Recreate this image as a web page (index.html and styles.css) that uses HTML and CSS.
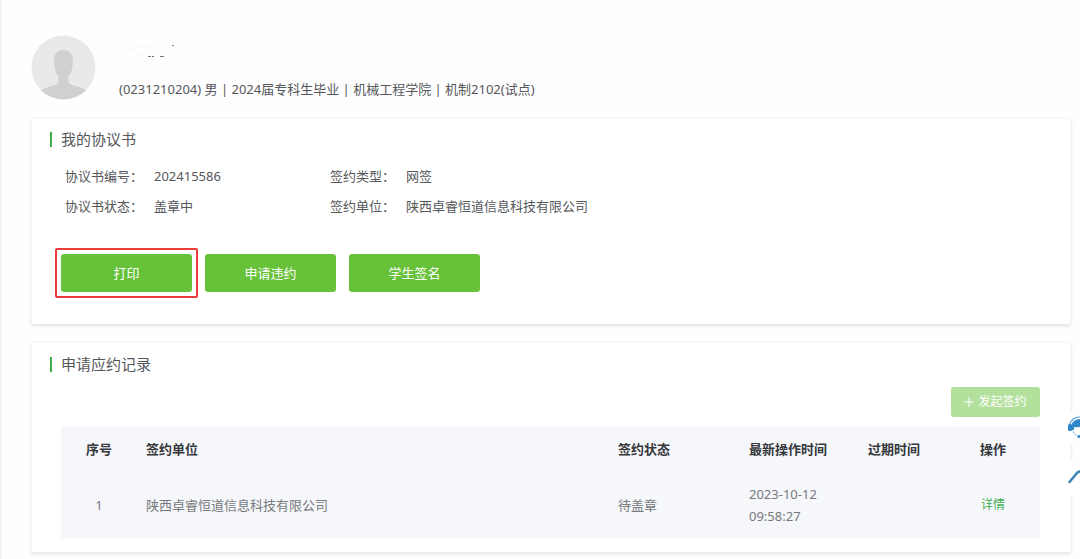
FILE: index.html
```
<!DOCTYPE html>
<html lang="zh-CN">
<head>
  <meta charset="UTF-8" />
  <meta name="viewport" content="width=device-width, initial-scale=1.0" />
  <title>我的协议书</title>
  <link rel="stylesheet" href="styles.css">
</head>

<body>
  <main class="page">
    <header class="profile">
      <svg class="avatar" viewBox="0 0 66 66" aria-hidden="true">
        <defs>
          <clipPath id="avatarClip"><circle cx="32.500" cy="32.500" r="32" /></clipPath>
        </defs>
        <circle cx="32.500" cy="32.500" r="32" fill="#e8eaea" />
        <g clip-path="url(#avatarClip)" fill="#cfd0d0">
          <path d="M32.500 15c6 0 9.500 4 9.500 10 0 2-.2 4-.5 6-.5 5-2 8-4 10v5c0 3 3 4 7 5 6 1.500 10 3 14 6.500v10H7V57.500c4-3.500 8-5 14-6.500 4-1 6.500-2 6.500-5v-5c-2-2-3.500-5-4-10-.3-2-.5-4-.5-6 0-6 3.500-10 9.500-10z" />
        </g>
      </svg>
      <div class="profile-text">
        <!-- name is masked out, only traces remain -->
        <svg class="masked-name" viewBox="0 0 80 20" aria-hidden="true">
          <path d="M4 5h5M14 6h6M22 4h12M7 16h3M15 17h2M21 11h6M50 4h6" stroke="#f5f5f5" stroke-width="1" />
          <path d="M33 13.500h3M37 13.500h2M45 13.500h4" stroke="#777" stroke-width="1" />
          <path d="M57 2.500h2" stroke="#888" stroke-width="1" />
        </svg>
        <p class="profile-info">(0231210204) 男 | 2024届专科生毕业 | 机械工程学院 | 机制2102(试点)</p>
      </div>
    </header>

    <section class="card agreement">
      <h2 class="card-title">我的协议书</h2>
      <dl class="info">
        <dt>协议书编号：</dt><dd>202415586</dd>
        <dt>签约类型：</dt><dd>网签</dd>
        <dt>协议书状态：</dt><dd>盖章中</dd>
        <dt>签约单位：</dt><dd>陕西卓睿恒道信息科技有限公司</dd>
      </dl>
      <div class="actions">
        <span class="highlight"><button type="button" class="btn">打印</button></span>
        <button type="button" class="btn">申请违约</button>
        <button type="button" class="btn">学生签名</button>
      </div>
    </section>

    <section class="card records">
      <h2 class="card-title">申请应约记录</h2>
      <div class="toolbar">
        <button type="button" class="btn-add" disabled>
          <svg class="plus" viewBox="0 0 10 10" aria-hidden="true"><path d="M5 0v10M0 5h10" stroke="#fff" /></svg>
          发起签约
        </button>
      </div>
      <table class="table">
        <colgroup>
          <col class="col-no">
          <col>
          <col class="col-status">
          <col class="col-time">
          <col class="col-expire">
          <col class="col-action">
        </colgroup>
        <thead>
          <tr>
            <th class="center">序号</th>
            <th>签约单位</th>
            <th>签约状态</th>
            <th>最新操作时间</th>
            <th>过期时间</th>
            <th class="center">操作</th>
          </tr>
        </thead>
        <tbody>
          <tr>
            <td class="center">1</td>
            <td>陕西卓睿恒道信息科技有限公司</td>
            <td>待盖章</td>
            <td>2023-10-12 09:58:27</td>
            <td></td>
            <td class="center"><a class="detail" href="#">详情</a></td>
          </tr>
        </tbody>
      </table>
    </section>
  </main>

  <!-- floating tools, half tucked behind the right edge -->
  <aside class="float-tools">
    <button type="button" class="tool" aria-label="在线客服">
      <svg viewBox="0 0 24 24" aria-hidden="true">
        <path d="M1.500 9C3 3.500 7 1 12 1s9 2.500 10.500 8" fill="none" stroke="#4a98d2" stroke-width="1.200" />
        <path d="M3 14C2.500 6.500 6.500 3 12 3s9.500 3.500 9 11h-2l-2-4c-3 1-7 1.500-11 1v3z" fill="#2f87ca" />
        <rect x="0" y="8" width="4" height="7" rx="1.500" fill="#2f87ca" />
        <rect x="20" y="8" width="4" height="7" rx="1.500" fill="#2f87ca" />
        <path d="M5 15c1 3 2 4 5 5" fill="none" stroke="#8fc1e3" stroke-width="1" />
        <circle cx="11" cy="20.500" r="1.500" fill="#2f87ca" />
      </svg>
    </button>
    <button type="button" class="tool" aria-label="返回顶部">
      <svg viewBox="0 0 24 24" aria-hidden="true">
        <path d="M1.500 16L9.500 6.500q2.500-2 5 0l8 9.500" fill="none" stroke="#3b86b8" stroke-width="2.500" stroke-linecap="round" />
      </svg>
    </button>
  </aside>
</body>
</html>
```
FILE: styles.css
```
:root {
  --green: #67c23a;
  --green-line: #3fae49;
  --text: #55575b;
  --text-light: #77797d;
  --table-bg: #f5f7fa;
}

* {
  box-sizing: border-box;
}

body {
  margin: 0;
  font-family: "Noto Sans", "Noto Sans CJK SC", sans-serif;
  font-size: 13px;
  line-height: 22px;
  color: var(--text);
  background: #fefefe;
  border-left: 2px solid #f4f4f4;
  overflow-x: hidden;
}

.page {
  padding: 35px 9px 6px 29px;
}

.profile {
  display: flex;
  gap: 22px;
  height: 83px;
}

.avatar {
  width: 66px;
  height: 66px;
}

.masked-name {
  display: block;
  width: 80px;
  height: 20px;
  margin: 8px 0 15px -4px;
}

.profile-info {
  margin: 0;
}

.card {
  background: #fff;
  border: 1px solid #f6f6f6;
  border-bottom-color: #ececec;
  border-radius: 2px;
  box-shadow: 0 1px 3px rgba(0, 0, 0, 0.12);
}

.card + .card {
  margin-top: 17px;
}

.card-title {
  margin: 0;
  padding-left: 9px;
  border-left: 2px solid var(--green-line);
  font-size: 15px;
  font-weight: 400;
  line-height: 15px;
}

.agreement {
  padding: 13px 18px 26px;
}

.info {
  display: grid;
  grid-template-columns: 89px 176px 76px 1fr;
  row-gap: 8px;
  margin: 18px 0 31px 15px;
}

.info dd {
  margin: 0;
}

.actions {
  display: flex;
  align-items: center;
  gap: 13px;
  margin-left: 5px;
}

.highlight {
  display: flex;
  padding: 4px;
  margin-right: -6px;
  border: 2px solid #e93c3c;
  border-radius: 2px;
}

.btn {
  width: 131px;
  height: 38px;
  padding: 0;
  border: 0;
  border-radius: 3px;
  background: var(--green);
  color: #fff;
  font: inherit;
  cursor: pointer;
}

.records {
  padding: 14px 30px 14px 18px;
}

.toolbar {
  display: flex;
  justify-content: flex-end;
  margin: 15px 0 9px;
}

.btn-add {
  display: flex;
  align-items: center;
  justify-content: center;
  gap: 4px;
  width: 89px;
  height: 30px;
  padding: 0;
  border: 0;
  border-radius: 3px;
  background: #b3e19d;
  color: #fff;
  font: inherit;
  font-size: 12px;
}

.plus {
  width: 10px;
  height: 10px;
}

.table {
  width: calc(100% - 11px);
  margin-left: 11px;
  border-collapse: collapse;
  table-layout: fixed;
  background: var(--table-bg);
}

.col-no { width: 76px; }
.col-status { width: 131px; }
.col-time { width: 119px; }
.col-expire { width: 87px; }
.col-action { width: 94px; }

.table th,
.table td {
  padding: 0 9px 2px;
  text-align: left;
}

.table th {
  height: 47px;
  color: #36383c;
  font-weight: 700;
}

.table td {
  height: 65px;
  color: var(--text-light);
}

.table .center {
  text-align: center;
}

.detail {
  color: #45ad55;
  font-size: 12px;
  text-decoration: none;
}

.float-tools {
  position: fixed;
  top: 411px;
  right: -16px;
  display: flex;
  flex-direction: column;
  gap: 16px;
}

.tool {
  width: 34px;
  height: 34px;
  padding: 5px 4px 5px 6px;
  border: 0;
  border-radius: 3px;
  background: #fff;
  cursor: pointer;
}

.tool svg {
  display: block;
  width: 24px;
  height: 24px;
}
```
